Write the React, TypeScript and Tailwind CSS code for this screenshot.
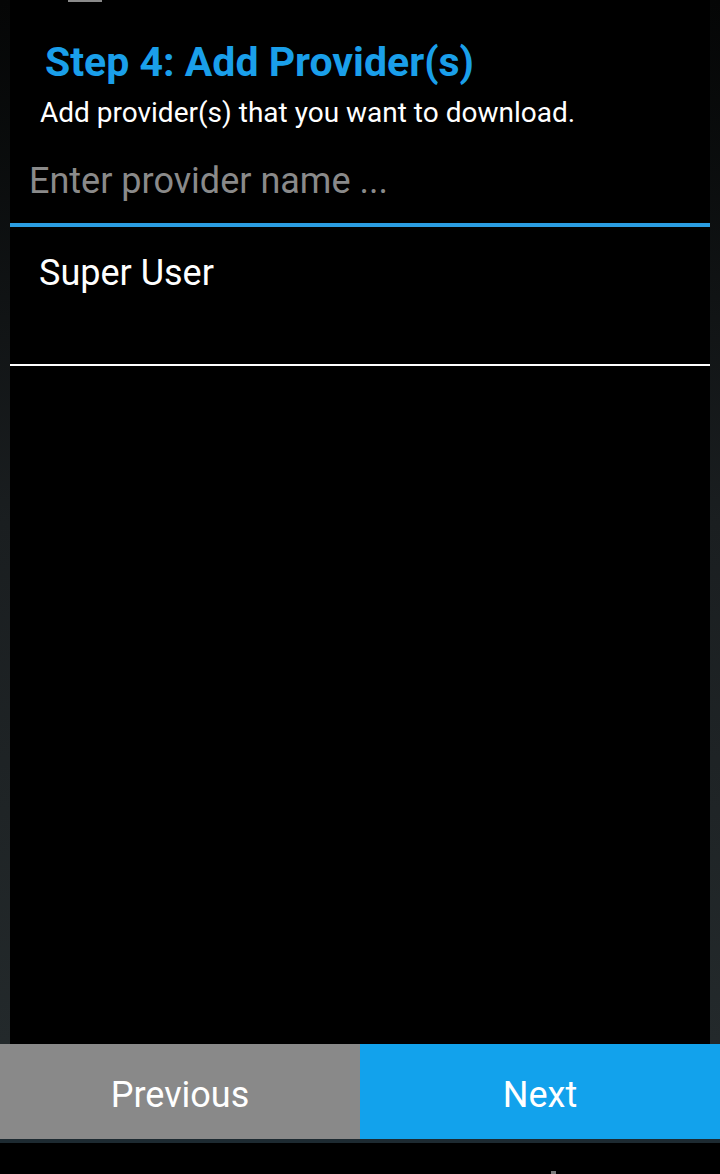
export default function App() {
  return (
    <div className="w-[720px] h-[1174px] bg-black flex flex-col font-['Roboto','Noto_Sans',sans-serif] overflow-hidden">
      {/* wizard body with the dim side edges */}
      <div className="flex h-[1044px]">
        <div className="w-[10px] bg-gradient-to-b from-[#050606] via-[#1a1e20] to-[#23292b]" />
        <div className="flex-1 flex flex-col bg-black">
          <div className="h-[2px] w-[34px] ml-[58px] bg-[#8a8a8a]" />

          <h1 className="mt-[37px] pl-[35px] text-[41px] leading-[46px] font-bold text-[#1a9fea]">
            Step 4: Add Provider(s)
          </h1>
          <p className="mt-[12px] pl-[30px] text-[28px] leading-[32px] text-white">
            Add provider(s) that you want to download.
          </p>

          {/* search box */}
          <div className="mt-[31px]">
            <input
              type="text"
              placeholder="Enter provider name ..."
              className="w-full h-[42px] pl-[19px] bg-transparent text-[36px] text-white outline-none placeholder:text-[#8a8a8a]"
            />
          </div>
          <div className="mt-[21px] h-[4px] bg-[#2a9de2]" />

          {/* providers list */}
          <div className="mt-[26px] pl-[29px] text-[36px] leading-[40px] text-white">Super User</div>
          <div className="mt-[71px] h-[2px] bg-white" />

          <div className="flex-1" />
        </div>
        <div className="w-[10px] bg-gradient-to-b from-[#050606] via-[#1a1e20] to-[#23292b]" />
      </div>

      {/* footer buttons */}
      <div className="flex h-[95px]">
        <button className="w-[360px] bg-[#898989] text-white text-[36px] leading-none pt-[7px] flex items-center justify-center">
          Previous
        </button>
        <button className="flex-1 bg-[#12a2ec] text-white text-[36px] leading-none pt-[7px] flex items-center justify-center">
          Next
        </button>
      </div>
      <div className="h-[4px] bg-[#1d2a31]" />
      <div className="flex-1 relative">
        <div className="absolute left-[551px] bottom-0 w-[5px] h-[3px] bg-[#777]" />
      </div>
    </div>
  )
}
